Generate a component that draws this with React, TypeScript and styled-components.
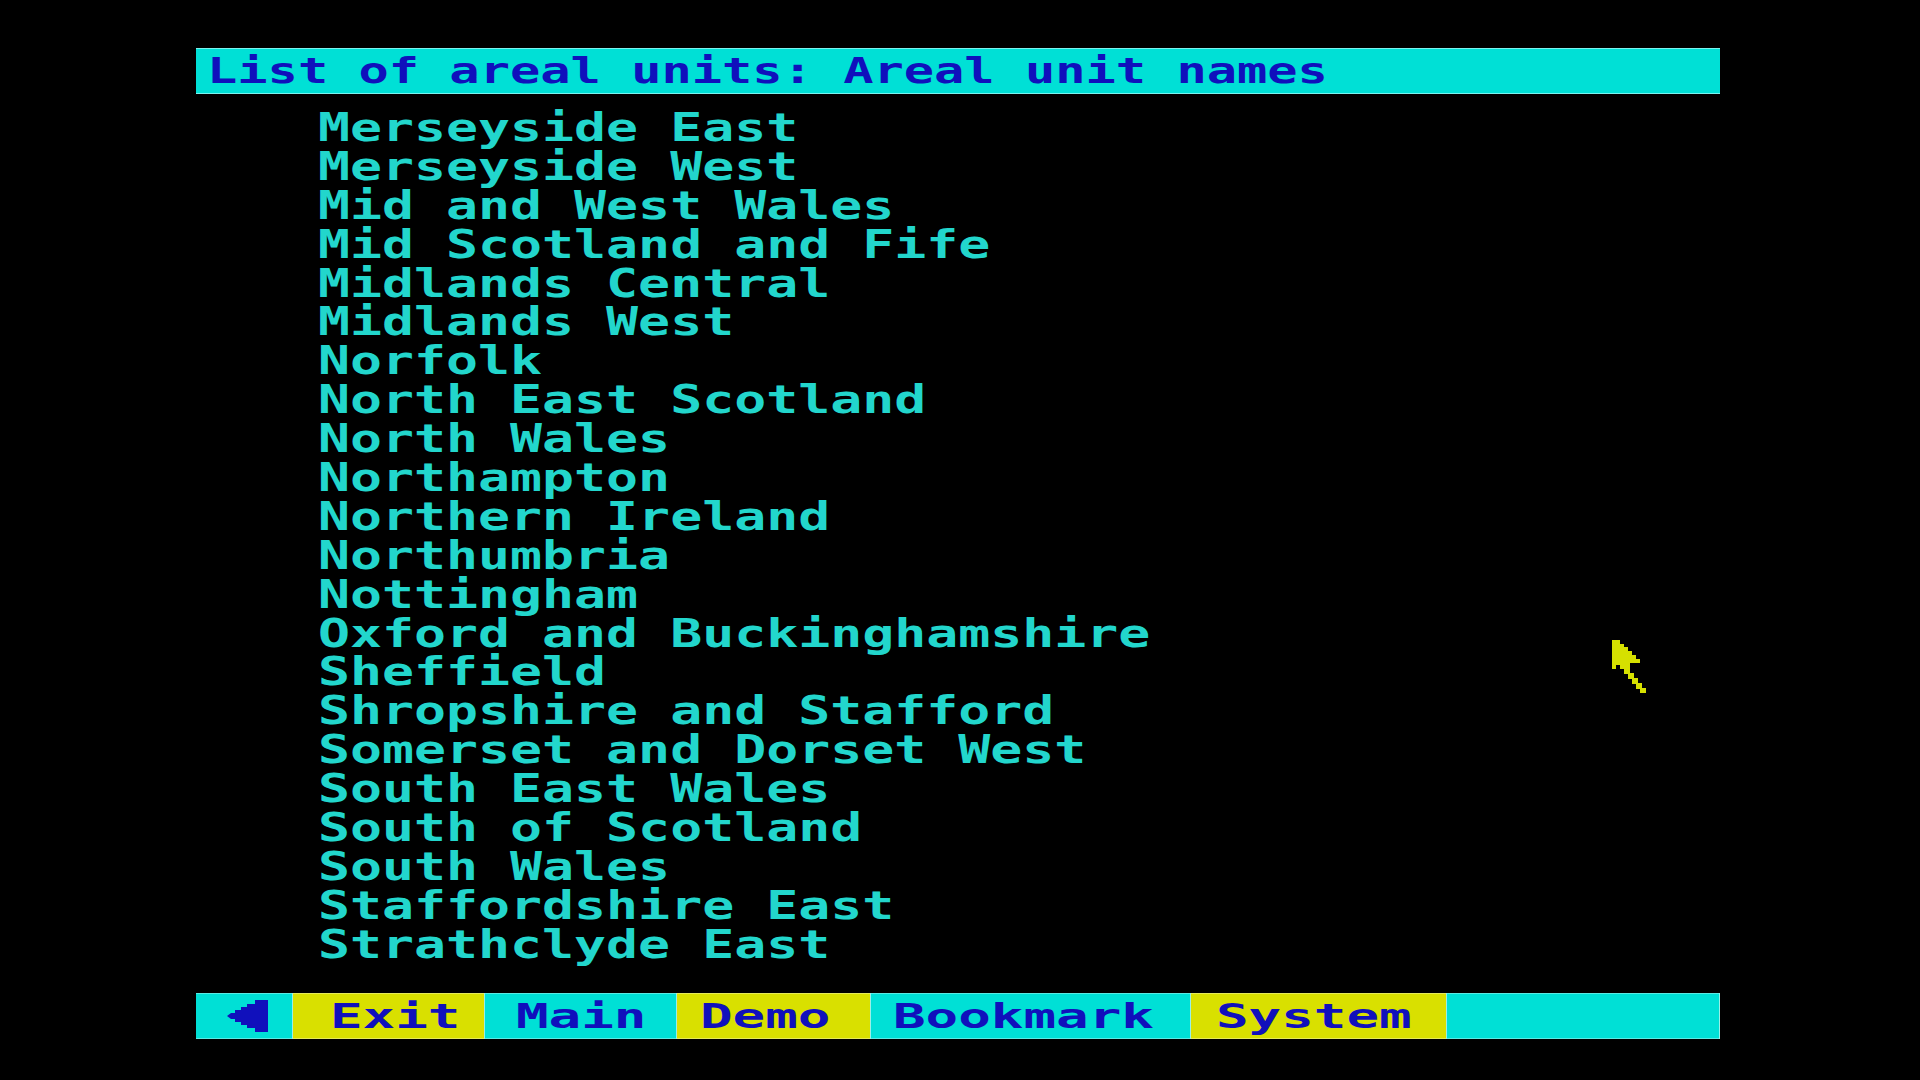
import React from "react";
import styled, { createGlobalStyle } from "styled-components";

const GlobalStyle = createGlobalStyle`
  html, body {
    margin: 0;
    padding: 0;
    background: #000;
  }
  body {
    width: 1920px;
    height: 1080px;
    overflow: hidden;
    font-family: "DejaVu Sans Mono", "Liberation Mono", monospace;
  }
`;

const CYAN = "#00e0d6";
const YELLOW = "#d9e000";
const BLUE = "#1010bc";
const LIST_CYAN = "#22d6cc";

const Screen = styled.div`
  position: relative;
  width: 1920px;
  height: 1080px;
  background: #000;
  padding: 48px 0 0 196px;
  box-sizing: border-box;
  display: flex;
  flex-direction: column;
`;

const TitleBar = styled.div`
  width: 1524px;
  height: 46px;
  background: ${CYAN};
  box-shadow: inset 0 1px 0 #7af4f0, inset 0 -1px 0 #7af4f0;
  display: flex;
  align-items: center;
  padding-left: 11px;
  box-sizing: border-box;
  overflow: hidden;
`;

const PixelText = styled.span<{ $size: number; $scale: number; $color: string; $lh: number }>`
  display: inline-block;
  font-family: "DejaVu Sans Mono", "Liberation Mono", monospace;
  font-weight: bold;
  font-size: ${(p) => p.$size}px;
  line-height: ${(p) => p.$lh}px;
  color: ${(p) => p.$color};
  white-space: pre;
  transform: scaleX(${(p) => p.$scale});
  transform-origin: 0 50%;
`;

const List = styled.ul`
  list-style: none;
  margin: 15px 0 0 0;
  padding: 0 0 0 122px;
  display: flex;
  flex-direction: column;
`;

const Item = styled.li`
  height: 38.9px;
  display: flex;
  align-items: flex-start;
`;

const BottomBar = styled.nav`
  margin-top: 28px;
  width: 1524px;
  height: 46px;
  display: flex;
  background: ${CYAN};
  box-shadow: inset 0 1px 0 #7af4f0, inset 0 -1px 0 #7af4f0;
  overflow: hidden;
`;

const Cell = styled.div<{ $w?: number; $bg: string; $pad: number }>`
  ${(p) => (p.$w ? `width: ${p.$w}px; flex: none;` : "flex: 1;")}
  height: 46px;
  background: ${(p) => p.$bg};
  padding-left: ${(p) => p.$pad}px;
  box-sizing: border-box;
  display: flex;
  align-items: center;
  border-right: 1px solid #9af0e8;
  box-shadow: inset 0 1px 0 rgba(255, 255, 255, 0.35), inset 0 -1px 0 rgba(255, 255, 255, 0.35);
  overflow: hidden;
`;

const Cursor = styled.svg`
  position: absolute;
  left: 1611px;
  top: 639px;
`;

const names = [
  "Merseyside East",
  "Merseyside West",
  "Mid and West Wales",
  "Mid Scotland and Fife",
  "Midlands Central",
  "Midlands West",
  "Norfolk",
  "North East Scotland",
  "North Wales",
  "Northampton",
  "Northern Ireland",
  "Northumbria",
  "Nottingham",
  "Oxford and Buckinghamshire",
  "Sheffield",
  "Shropshire and Stafford",
  "Somerset and Dorset West",
  "South East Wales",
  "South of Scotland",
  "South Wales",
  "Staffordshire East",
  "Strathclyde East",
];

type Btn = { label: string; w: number; bg: string; pad: number };

const buttons: Btn[] = [
  { label: "Exit", w: 192, bg: YELLOW, pad: 37 },
  { label: "Main", w: 192, bg: CYAN, pad: 31 },
  { label: "Demo", w: 194, bg: YELLOW, pad: 23 },
  { label: "Bookmark", w: 320, bg: CYAN, pad: 22 },
  { label: "System", w: 256, bg: YELLOW, pad: 25 },
];

export default function App() {
  return (
    <>
      <GlobalStyle />
      <Screen>
        <TitleBar>
          <PixelText $size={35.7} $scale={1.41} $color={BLUE} $lh={46}>
            List of areal units: Areal unit names
          </PixelText>
        </TitleBar>
        <List>
          {names.map((n) => (
            <Item key={n}>
              <PixelText $size={38.4} $scale={1.385} $color={LIST_CYAN} $lh={38.9}>
                {n}
              </PixelText>
            </Item>
          ))}
        </List>
        <BottomBar>
          <Cell $w={97} $bg={CYAN} $pad={31}>
            <svg width="42" height="34" viewBox="0 0 42 34">
              <path
                d="M0 17 L4 14 L8 14 L8 11 L14 11 L14 8 L20 8 L20 5 L28 5 L28 1 L41 1 L41 33 L28 33 L28 29 L20 29 L20 26 L14 26 L14 23 L8 23 L8 20 L4 20 Z"
                fill={BLUE}
              />
            </svg>
          </Cell>
          {buttons.map((b) => (
            <Cell key={b.label} $w={b.w} $bg={b.bg} $pad={b.pad}>
              <PixelText $size={34.3} $scale={1.58} $color={BLUE} $lh={46}>
                {b.label}
              </PixelText>
            </Cell>
          ))}
          <Cell $bg={CYAN} $pad={0} />
        </BottomBar>
        <Cursor width="40" height="56" viewBox="0 0 40 56">
          <path
            d="M1 1 L1 30 L5 30 L5 26 L9 26 L9 30 L13 30 L13 35 L17 35 L17 40 L21 40 L21 45 L25 45 L25 50 L29 50 L29 54 L35 54 L35 49 L31 49 L31 44 L27 44 L27 39 L23 39 L23 34 L19 34 L19 24 L29 24 L29 20 L25 20 L25 16 L21 16 L21 12 L17 12 L17 8 L13 8 L13 5 L9 5 L9 1 Z"
            fill="#d6e000"
          />
        </Cursor>
      </Screen>
    </>
  );
}
